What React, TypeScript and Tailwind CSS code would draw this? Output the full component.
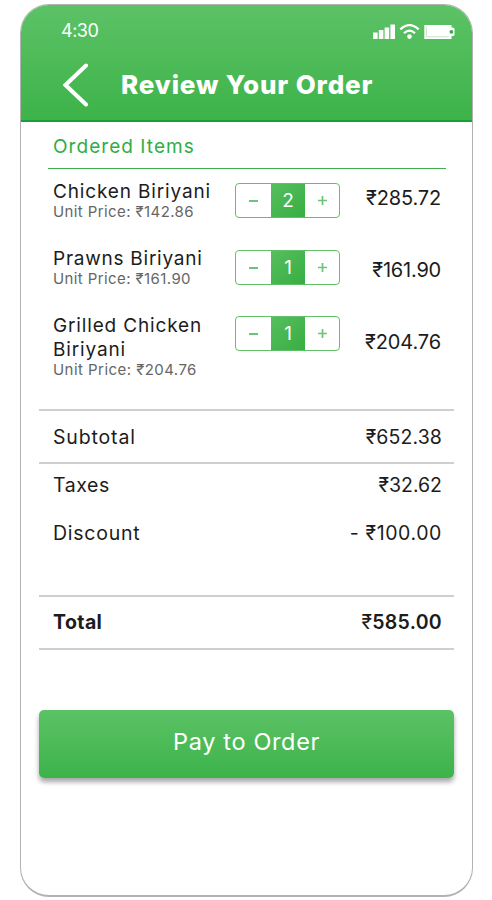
type OrderItem = {
  name: string;
  unitPrice: string;
  quantity: number;
  total: string;
  rowClass: string;
  nameClass: string;
  unitClass: string;
  stepperClass: string;
  totalClass: string;
};

const items: OrderItem[] = [
  {
    name: "Chicken Biriyani",
    unitPrice: "₹142.86",
    quantity: 2,
    total: "₹285.72",
    rowClass: "h-[67px]",
    nameClass: "tracking-[0.85px]",
    unitClass: "tracking-[0.4px]",
    stepperClass: "mt-[3px]",
    totalClass: "mt-[6px] tracking-[-0.15px]",
  },
  {
    name: "Prawns Biriyani",
    unitPrice: "₹161.90",
    quantity: 1,
    total: "₹161.90",
    rowClass: "h-[67px]",
    nameClass: "tracking-[0.75px]",
    unitClass: "tracking-[0.4px]",
    stepperClass: "mt-[3px]",
    totalClass: "mt-[11px] tracking-[-0.2px]",
  },
  {
    name: "Grilled Chicken Biriyani",
    unitPrice: "₹204.76",
    quantity: 1,
    total: "₹204.76",
    rowClass: "h-[96px]",
    nameClass: "tracking-[0.85px]",
    unitClass: "tracking-[0.45px]",
    stepperClass: "mt-[2px]",
    totalClass: "mt-[16px] tracking-[-0.1px]",
  },
];

function StatusIcons() {
  return (
    <svg width="82" height="16" viewBox="0 0 82 16" fill="none">
      <g fill="white">
        <rect x="0" y="8.5" width="4.6" height="6.5" />
        <rect x="5.8" y="6" width="4.6" height="9" />
        <rect x="11.6" y="3.5" width="4.6" height="11.5" />
        <rect x="17.4" y="0.5" width="4.6" height="14.5" />
        <circle cx="36.5" cy="12.6" r="2.3" />
        <path d="M78 3.5h1.8q1.7 0 1.7 1.7v5.2q0 1.7-1.7 1.7H78z" />
        <rect x="51.3" y="1" width="27.2" height="14" />
      </g>
      <path
        d="M27.3 5.4Q36.5-3 45.7 5.4M31 9.2Q36.5 4.2 42 9.2"
        stroke="white"
        strokeWidth="2.2"
      />
      <path d="M53.3 2.5v10.3h22.6" stroke="#a6dcab" strokeWidth="0.7" />
      <circle cx="78.4" cy="7.8" r="1.9" fill="#35ad45" />
    </svg>
  );
}

function QuantityStepper({ quantity }: { quantity: number }) {
  return (
    <div className="grid h-[35px] w-[105px] grid-cols-[35px_34px_1fr] overflow-hidden rounded-[4px] border border-[#62bf6a]">
      <button className="flex items-center justify-center">
        <span className="h-[2px] w-[9px] bg-[#6dc376]" />
      </button>
      <span className="flex items-center justify-center bg-linear-to-br from-[#56be5e] to-[#36ae42] pt-px text-[19px] text-white">
        {quantity}
      </span>
      <button className="flex items-center justify-center">
        <svg width="9" height="9" viewBox="0 0 9 9">
          <path d="M0 4.5h9M4.5 0v9" stroke="#6dc376" strokeWidth="1.7" />
        </svg>
      </button>
    </div>
  );
}

function OrderRow({ item }: { item: OrderItem }) {
  return (
    <div className={`flex items-start pr-[13px] pl-[14px] ${item.rowClass}`}>
      <div className="w-[182px] shrink-0">
        <div className={`w-[170px] text-[19px] leading-[24px] ${item.nameClass}`}>
          {item.name}
        </div>
        <div
          className={`-mt-px text-[15px] leading-[18px] text-[#666] ${item.unitClass}`}
        >
          Unit Price: {item.unitPrice}
        </div>
      </div>
      <div className={item.stepperClass}>
        <QuantityStepper quantity={item.quantity} />
      </div>
      <div className={`ml-auto text-[20px] leading-[24px] ${item.totalClass}`}>
        {item.total}
      </div>
    </div>
  );
}

export default function App() {
  return (
    <div className="h-[900px] w-[492px] bg-white pt-[4px] pl-[20px] font-['Inter',sans-serif] text-[#1c1c1c]">
      <div className="h-[893px] w-[453px] overflow-hidden rounded-[29px] border border-b-2 border-[#b2b2b2] bg-white">
        <header className="h-[117px] border-b-2 border-[#16a035] bg-linear-to-b from-[#5cc266] to-[#3cb349] text-white">
          <div className="flex items-start justify-between pt-[14px] pr-[17px] pl-[40px]">
            <span className="text-[18px] leading-[24px] tracking-[-0.5px]">
              4:30
            </span>
            <span className="mt-[5px]">
              <StatusIcons />
            </span>
          </div>
          <div className="mt-[20px] flex items-center pl-[42px]">
            <svg width="26" height="44" viewBox="0 0 26 44" fill="none">
              <path
                d="M23 2.5L2.5 22L23 41.5"
                stroke="white"
                strokeWidth="4"
                strokeLinecap="round"
              />
            </svg>
            <h1 className="ml-[32px] text-[26px] leading-[32px] font-extrabold tracking-[0.85px]">
              Review Your Order
            </h1>
          </div>
        </header>

        <main className="mr-[18px] ml-[18px] flex flex-col">
          <h2 className="mr-[8px] ml-[9px] h-[47px] border-b border-[#3fae4d] pt-[13px] pl-[5px] text-[19px] leading-[24px] tracking-[1.05px] text-[#2fae45]">
            Ordered Items
          </h2>

          <div className="mt-[11px] h-[229px]">
            {items.map((item) => (
              <OrderRow key={item.name} item={item} />
            ))}
          </div>

          <div className="flex h-[55px] items-center justify-between border-y-2 border-[#cfcfcf] pt-[2px] pr-[12px] pl-[14px] text-[19.5px]">
            <span className="tracking-[0.85px]">Subtotal</span>
            <span className="tracking-[0.1px]">₹652.38</span>
          </div>
          <div className="h-[131px] pt-[9px] pr-[12px] pl-[14px] text-[19.5px] leading-[24px]">
            <div className="flex justify-between">
              <span className="tracking-[0.6px]">Taxes</span>
              <span>₹32.62</span>
            </div>
            <div className="mt-[24px] flex justify-between">
              <span className="tracking-[0.75px]">Discount</span>
              <span className="tracking-[0.6px]">- ₹100.00</span>
            </div>
          </div>
          <div className="flex h-[55px] items-center justify-between border-y-2 border-[#cfcfcf] pr-[12px] pl-[14px] text-[19.5px]">
            <span className="font-bold tracking-[0.4px]">Total</span>
            <span className="font-semibold tracking-[0.3px]">
              <span className="font-normal">₹</span>585.00
            </span>
          </div>

          <button className="mt-[60px] flex h-[68px] items-center justify-center rounded-[5px] bg-linear-to-b from-[#5bc266] to-[#3cb349] pb-[4px] text-[23.5px] tracking-[0.65px] text-white shadow-[0_4px_5px_rgba(0,0,0,0.35)]">
            Pay to Order
          </button>
        </main>
      </div>
    </div>
  );
}
